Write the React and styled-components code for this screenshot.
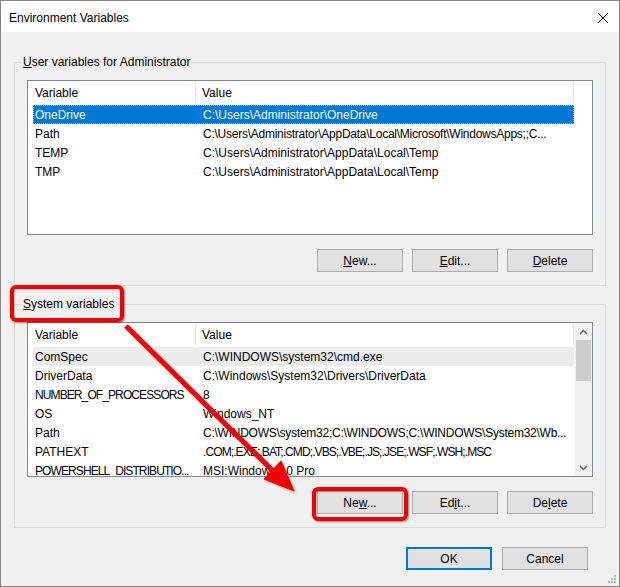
import React from "react";
import styled, { createGlobalStyle } from "styled-components";

const GlobalStyle = createGlobalStyle`
  body {
    margin: 0;
    background: #ffffff;
    font-family: "Liberation Sans", Arial, sans-serif;
    font-size: 12px;
    color: #000;
  }
`;

const Window = styled.div`
  position: relative;
  width: 620px;
  height: 587px;
  box-sizing: border-box;
  border: 1px solid #858585;
  display: flex;
  flex-direction: column;
  background: #f0f0f0;
`;

const TitleBar = styled.div`
  height: 31px;
  background: #ffffff;
  display: flex;
  align-items: center;
  justify-content: space-between;
  padding: 0 10px 0 8px;
`;

const Title = styled.div`
  font-size: 12px;
  padding-top: 3px;
`;

const Close = styled.div`
  width: 12px;
  height: 12px;
  display: flex;
  margin-top: 2px;
`;

const Body = styled.div`
  flex: 1;
  display: flex;
  flex-direction: column;
  padding: 22px 13px 0 13px;
  position: relative;
`;

const Group = styled.fieldset`
  margin: 0 0 ${(p) => p.$gap || 0}px 0;
  padding: 10px 12px 13px 12px;
  border: 1px solid #dcdcdc;
  min-width: 0;
`;

const Legend = styled.legend`
  font-size: 12px;
  line-height: 17px;
  height: 16px;
  padding: 0 2px;
  margin-left: -6px;
`;

const ListView = styled.div`
  height: 155px;
  box-sizing: border-box;
  border: 1px solid #828790;
  background: #ffffff;
  display: flex;
  overflow: hidden;
`;

const ListMain = styled.div`
  flex: 1;
  display: flex;
  flex-direction: column;
  min-width: 0;
`;

const Header = styled.div`
  display: grid;
  grid-template-columns: 168px 378px;
  height: 24px;
  flex-shrink: 0;
`;

const HeaderCell = styled.div`
  padding-left: ${(p) => p.$pad}px;
  border-right: 1px solid #e5e5e5;
  line-height: 24px;
  height: 22px;
  overflow: hidden;
`;

const Row = styled.div`
  display: grid;
  grid-template-columns: 163px 378px;
  margin-left: 5px;
  width: 541px;
  height: 19px;
  line-height: 21px;
  overflow: hidden;
  flex-shrink: 0;
  box-sizing: border-box;
  background: ${(p) =>
    p.$state === "selected" ? "#0078d7" : p.$state === "hover" ? "#ececec" : "transparent"};
  color: ${(p) => (p.$state === "selected" ? "#ffffff" : "#000000")};
  outline: ${(p) => (p.$state === "selected" ? "1px dotted #f5a623" : "none")};
  outline-offset: -1px;
`;

const Cell = styled.div`
  padding-left: ${(p) => p.$pad}px;
  white-space: nowrap;
  overflow: hidden;
  letter-spacing: ${(p) => p.$tight || 0}px;
`;

const ScrollBar = styled.div`
  width: 17px;
  flex-shrink: 0;
  background: #f0f0f0;
  display: flex;
  flex-direction: column;
`;

const ScrollArrow = styled.div`
  height: 17px;
  display: flex;
  align-items: center;
  justify-content: center;
`;

const ScrollTrack = styled.div`
  flex: 1;
  display: flex;
  flex-direction: column;
  padding: 0 1px;
`;

const Thumb = styled.div`
  height: 41px;
  background: #cdcdcd;
`;

const ButtonRow = styled.div`
  display: flex;
  justify-content: flex-end;
  gap: 9px;
  margin-top: 14px;
`;

const Button = styled.div`
  width: 86px;
  height: 23px;
  box-sizing: border-box;
  background: #e1e1e1;
  border: ${(p) => (p.$default ? "2px solid #0078d7" : "1px solid #adadad")};
  display: flex;
  align-items: center;
  justify-content: center;
  font-size: 12px;
`;

const Footer = styled.div`
  display: flex;
  justify-content: flex-end;
  gap: 10px;
  margin-top: 19px;
  padding-right: 18px;
`;

const Grip = styled.svg`
  position: absolute;
  right: 2px;
  bottom: 2px;
`;

const Overlay = styled.svg`
  position: absolute;
  left: -1px;
  top: -1px;
  pointer-events: none;
`;

const RedBox = styled.div`
  position: absolute;
  left: ${(p) => p.$x}px;
  top: ${(p) => p.$y}px;
  width: ${(p) => p.$w}px;
  height: ${(p) => p.$h}px;
  box-sizing: border-box;
  border: 4px solid #f20000;
  border-radius: 6px;
  box-shadow: 1px 1px 2px rgba(0, 0, 0, 0.45), inset 1px 1px 1px rgba(0, 0, 0, 0.2);
  pointer-events: none;
`;

const userVars = [
  ["OneDrive", "C:\\Users\\Administrator\\OneDrive", "selected"],
  ["Path", "C:\\Users\\Administrator\\AppData\\Local\\Microsoft\\WindowsApps;;C..."],
  ["TEMP", "C:\\Users\\Administrator\\AppData\\Local\\Temp"],
  ["TMP", "C:\\Users\\Administrator\\AppData\\Local\\Temp"],
];

const systemVars = [
  ["ComSpec", "C:\\WINDOWS\\system32\\cmd.exe", "hover"],
  ["DriverData", "C:\\Windows\\System32\\Drivers\\DriverData"],
  ["NUMBER_OF_PROCESSORS", "8"],
  ["OS", "Windows_NT"],
  ["Path", "C:\\WINDOWS\\system32;C:\\WINDOWS;C:\\WINDOWS\\System32\\Wb..."],
  ["PATHEXT", ".COM;.EXE;.BAT;.CMD;.VBS;.VBE;.JS;.JSE;.WSF;.WSH;.MSC"],
  ["POWERSHELL_DISTRIBUTIO...", "MSI:Windows 10 Pro"],
];

// uppercase names and long paths run wider in this font than in the original
const tightness = (text) => {
  if (text.length > 18 && text === text.toUpperCase()) return -0.9;
  if (text.length > 50) return -0.25;
  return 0;
};

const Chevron = ({ up }) => (
  <svg width="9" height="6" viewBox="0 0 9 6">
    <path
      d={up ? "M1 5 L4.5 1.5 L8 5" : "M1 1 L4.5 4.5 L8 1"}
      fill="none"
      stroke="#606060"
      strokeWidth="1.4"
    />
  </svg>
);

const VarList = ({ rows, scroll }) => (
  <ListView>
    <ListMain>
      <Header>
        <HeaderCell $pad={7}>Variable</HeaderCell>
        <HeaderCell $pad={6}>Value</HeaderCell>
      </Header>
      {rows.map(([name, value, state]) => (
        <Row key={name + value} $state={state}>
          <Cell $pad={2} $tight={tightness(name)}>
            {name}
          </Cell>
          <Cell $pad={7} $tight={tightness(value)}>
            {value}
          </Cell>
        </Row>
      ))}
    </ListMain>
    {scroll && (
      <ScrollBar>
        <ScrollArrow>
          <Chevron up />
        </ScrollArrow>
        <ScrollTrack>
          <Thumb />
        </ScrollTrack>
        <ScrollArrow>
          <Chevron />
        </ScrollArrow>
      </ScrollBar>
    )}
  </ListView>
);

export default function App() {
  return (
    <>
      <GlobalStyle />
      <Window>
        <TitleBar>
          <Title>Environment Variables</Title>
          <Close>
            <svg width="12" height="12" viewBox="0 0 12 12">
              <path d="M1 1 L11 11 M11 1 L1 11" stroke="#000" strokeWidth="1" />
            </svg>
          </Close>
        </TitleBar>
        <Body>
          <Group $gap={10}>
            <Legend>
              <u>U</u>ser variables for Administrator
            </Legend>
            <VarList rows={userVars} />
            <ButtonRow>
              <Button>
                <span><u>N</u>ew...</span>
              </Button>
              <Button>
                <span><u>E</u>dit...</span>
              </Button>
              <Button>
                <span><u>D</u>elete</span>
              </Button>
            </ButtonRow>
          </Group>
          <Group>
            <Legend>
              <u>S</u>ystem variables
            </Legend>
            <VarList rows={systemVars} scroll />
            <ButtonRow>
              <Button>
                <span>Ne<u>w</u>...</span>
              </Button>
              <Button>
                <span>Ed<u>i</u>t...</span>
              </Button>
              <Button>
                <span>De<u>l</u>ete</span>
              </Button>
            </ButtonRow>
          </Group>
          <Footer>
            <Button $default>OK</Button>
            <Button>Cancel</Button>
          </Footer>
          <Grip width="10" height="10" viewBox="0 0 10 10">
            <g fill="#b8b8b8">
              <rect x="7" y="1" width="2" height="2" />
              <rect x="4" y="4" width="2" height="2" />
              <rect x="7" y="4" width="2" height="2" />
              <rect x="1" y="7" width="2" height="2" />
              <rect x="4" y="7" width="2" height="2" />
              <rect x="7" y="7" width="2" height="2" />
            </g>
          </Grip>
        </Body>
        <RedBox $x={9} $y={284} $w={114} $h={37} />
        <RedBox $x={311} $y={486} $w={96} $h={34} />
        <Overlay width="620" height="587" viewBox="0 0 620 587">
          <defs>
            <filter id="sh" x="-10%" y="-10%" width="120%" height="120%">
              <feDropShadow dx="1" dy="1" stdDeviation="0.8" floodColor="#000" floodOpacity="0.35" />
            </filter>
          </defs>
          <g filter="url(#sh)" fill="#f20000" stroke="#f20000">
            <line x1="126" y1="326" x2="276" y2="474" strokeWidth="5" />
            <polygon points="294,491 264,479 281,461" strokeWidth="1" />
          </g>
        </Overlay>
      </Window>
    </>
  );
}
